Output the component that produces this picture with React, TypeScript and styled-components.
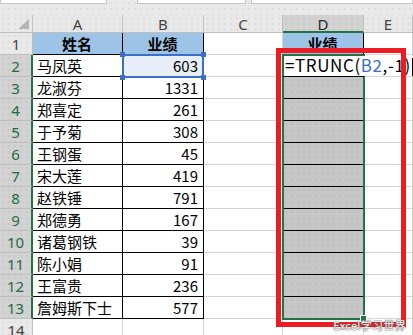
import React from "react";
import styled, { createGlobalStyle, css } from "styled-components";

const GlobalStyle = createGlobalStyle`
  html, body {
    margin: 0;
    padding: 0;
    background: #ffffff;
    overflow: hidden;
  }
  body {
    font-family: "Noto Sans CJK SC", "Noto Sans", sans-serif;
  }
`;

const rows = [
  { name: "马凤英", score: 603 },
  { name: "龙淑芬", score: 1331 },
  { name: "郑喜定", score: 261 },
  { name: "于予菊", score: 308 },
  { name: "王钢蛋", score: 45 },
  { name: "宋大莲", score: 419 },
  { name: "赵铁锤", score: 791 },
  { name: "郑德勇", score: 167 },
  { name: "诸葛钢铁", score: 39 },
  { name: "陈小娟", score: 91 },
  { name: "王富贵", score: 236 },
  { name: "詹姆斯下士", score: 577 },
];

const dots = css`
  background-image: radial-gradient(rgba(0, 0, 0, 0.07) 0.6px, transparent 0.9px);
  background-size: 6px 6px;
`;

// grid position: $r = grid row (1 = column headers), $c = grid column (1 = row headers)
const at = css<{ $r: number; $c: number }>`
  grid-row: ${(p) => p.$r};
  grid-column: ${(p) => p.$c};
`;

const Page = styled.div`
  position: relative;
  width: 413px;
  height: 335px;
  overflow: hidden;
  background: #e9e9e9;
`;

const TopStrip = styled.div`
  display: flex;
  height: 15px;
  ${dots};
`;

const TopBox = styled.div<{ $w: number; $ml?: number }>`
  width: ${(p) => p.$w}px;
  margin-left: ${(p) => p.$ml ?? 0}px;
  height: 4px;
  background: #ffffff;
  border: 1px solid #c6c6c6;
  border-top: none;
  box-sizing: border-box;
  flex-shrink: 0;
`;

const Sheet = styled.div`
  display: grid;
  grid-template-columns: 33px 90px 81px 79px 81px 49px;
  grid-template-rows: 18px repeat(14, 22px);
  background: #ffffff;
`;

const Corner = styled.div`
  grid-row: 1;
  grid-column: 1;
  position: relative;
  background: #e9e9e9;
  border-right: 1px solid #bfbfbf;
  border-bottom: 1px solid #bfbfbf;
  box-sizing: border-box;
  ${dots};
`;

const CornerMark = styled.svg`
  position: absolute;
  right: 3px;
  bottom: 3px;
`;

const ColHeader = styled.div<{ $r: number; $c: number; $sel?: boolean }>`
  ${at};
  display: flex;
  align-items: center;
  justify-content: center;
  box-sizing: border-box;
  background-color: ${(p) => (p.$sel ? "#d2d2d2" : "#e9e9e9")};
  ${dots};
  border-right: 1px solid #bfbfbf;
  border-bottom: ${(p) => (p.$sel ? "2px solid #217346" : "1px solid #bfbfbf")};
  font-family: "Noto Sans", "Liberation Sans", sans-serif;
  font-size: 15px;
  color: ${(p) => (p.$sel ? "#262626" : "#444444")};
  padding-top: 1px;
`;

const RowHeader = styled.div<{ $r: number; $c: number; $sel?: boolean }>`
  ${at};
  display: flex;
  align-items: center;
  justify-content: center;
  box-sizing: border-box;
  background-color: ${(p) => (p.$sel ? "#d2d2d2" : "#e9e9e9")};
  ${dots};
  border-bottom: 1px solid #bfbfbf;
  border-right: ${(p) => (p.$sel ? "2px solid #217346" : "1px solid #bfbfbf")};
  font-family: "Noto Sans", "Liberation Sans", sans-serif;
  font-size: 15px;
  color: ${(p) => (p.$sel ? "#1e6b43" : "#444444")};
`;

type Fill = "none" | "blue" | "grey" | "ref";

const fills: Record<Fill, string> = {
  none: "#ffffff",
  blue: "#9dc3e6",
  grey: "#c6c6c6",
  ref: "#e8eef8",
};

const Cell = styled.div<{
  $r: number;
  $c: number;
  $fill?: Fill;
  $table?: boolean;
  $align?: "left" | "right" | "center";
  $bold?: boolean;
  $spill?: boolean;
}>`
  ${at};
  display: flex;
  align-items: center;
  justify-content: ${(p) =>
    p.$align === "right" ? "flex-end" : p.$align === "center" ? "center" : "flex-start"};
  box-sizing: border-box;
  padding: 0 5px 0 4px;
  background-color: ${(p) => fills[p.$fill ?? "none"]};
  ${(p) => p.$fill === "grey" && dots};
  border-right: 1px solid ${(p) => (p.$table ? "#000000" : "#d4d4d4")};
  border-bottom: 1px solid ${(p) => (p.$table ? "#000000" : "#d4d4d4")};
  font-size: 15px;
  font-weight: ${(p) => (p.$bold ? 700 : 400)};
  color: #000000;
  white-space: nowrap;
  overflow: visible;
  ${(p) =>
    p.$spill &&
    css`
      position: relative;
      z-index: 4;
      background-color: transparent;
      border-right: none;
    `}
`;

const Formula = styled.span`
  display: inline-block;
  font-size: 17px;
  line-height: 18px;
  letter-spacing: 0.6px;
  color: #000000;
  margin-left: -2px;
  padding-right: 1px;
  background: #ffffff;
`;

const RefText = styled.span`
  color: #3d6fc6;
`;

const Caret = styled.span`
  display: inline-block;
  width: 1px;
  height: 18px;
  background: #000000;
  margin-left: 1px;
  vertical-align: -4px;
`;

const RefBox = styled.div`
  grid-column: 3;
  grid-row: 3;
  margin: -1px 0 -1px -1px;
  position: relative;
  z-index: 2;
  border: 2px solid #3d6fc6;
  pointer-events: none;
`;

const Handle = styled.span<{ $x: "l" | "r"; $y: "t" | "b" }>`
  position: absolute;
  width: 5px;
  height: 5px;
  background: #3d6fc6;
  ${(p) => (p.$x === "l" ? "left: -4px;" : "right: -4px;")}
  ${(p) => (p.$y === "t" ? "top: -4px;" : "bottom: -4px;")}
`;

const Selection = styled.div`
  grid-column: 5;
  grid-row: 3 / span 12;
  margin: -1px;
  position: relative;
  z-index: 3;
  border: 2px solid #217346;
  pointer-events: none;
`;

const FillHandle = styled.span`
  position: absolute;
  right: -4px;
  bottom: -4px;
  width: 5px;
  height: 5px;
  background: #217346;
  border: 1px solid #ffffff;
`;

const Annotation = styled.div`
  grid-column: 5 / span 2;
  grid-row: 3 / span 12;
  margin: -7px 7px -8px -7px;
  position: relative;
  z-index: 5;
  border: 5px solid #ed1c24;
  pointer-events: none;
`;

const Watermark = styled.div`
  position: absolute;
  right: 7px;
  bottom: 4px;
  z-index: 6;
  font-size: 11px;
  line-height: 12px;
  color: #ffffff;
  letter-spacing: 0.3px;
  text-shadow: 0 0 1px #555, 0 0 1px #555, 0 0 2px #777;
`;

const colLetters = ["A", "B", "C", "D", "E"];

export default function App() {
  return (
    <>
      <GlobalStyle />
      <Page>
        <TopStrip>
          <TopBox $w={107} />
          <TopBox $w={109} $ml={30} />
          <TopBox $w={162} $ml={5} />
        </TopStrip>
        <Sheet>
          <Corner>
            <CornerMark width="11" height="10" viewBox="0 0 11 10">
              <polygon points="11,0 11,10 0,10" fill="#b4b4b4" />
            </CornerMark>
          </Corner>
          {colLetters.map((l, c) => (
            <ColHeader key={l} $r={1} $c={c + 2} $sel={l === "D"}>
              {l}
            </ColHeader>
          ))}

          <RowHeader $r={2} $c={1}>1</RowHeader>
          <Cell $r={2} $c={2} $fill="blue" $table $align="center" $bold>
            姓名
          </Cell>
          <Cell $r={2} $c={3} $fill="blue" $table $align="center" $bold>
            业绩
          </Cell>
          <Cell $r={2} $c={4} />
          <Cell $r={2} $c={5} $fill="blue" $table $align="center" $bold>
            业绩
          </Cell>
          <Cell $r={2} $c={6} />

          {rows.map((r, i) => {
            const gr = i + 3;
            return (
              <React.Fragment key={r.name}>
                <RowHeader $r={gr} $c={1} $sel>
                  {i + 2}
                </RowHeader>
                <Cell $r={gr} $c={2} $table>
                  {r.name}
                </Cell>
                <Cell $r={gr} $c={3} $table $align="right" $fill={i === 0 ? "ref" : "none"}>
                  {r.score}
                </Cell>
                <Cell $r={gr} $c={4} />
                {i === 0 ? (
                  <Cell $r={gr} $c={5} $table $spill>
                    <Formula>
                      =TRUNC(<RefText>B2</RefText>,-1)
                      <Caret />
                    </Formula>
                  </Cell>
                ) : (
                  <Cell $r={gr} $c={5} $table $fill="grey" />
                )}
                <Cell $r={gr} $c={6} />
              </React.Fragment>
            );
          })}

          <RowHeader $r={15} $c={1}>14</RowHeader>
          {[2, 3, 4, 5, 6].map((c) => (
            <Cell key={c} $r={15} $c={c} />
          ))}

          <RefBox>
            <Handle $x="l" $y="t" />
            <Handle $x="r" $y="t" />
            <Handle $x="l" $y="b" />
            <Handle $x="r" $y="b" />
          </RefBox>
          <Selection>
            <FillHandle />
          </Selection>
          <Annotation />
        </Sheet>
        <Watermark>Excel学习世界</Watermark>
      </Page>
    </>
  );
}
